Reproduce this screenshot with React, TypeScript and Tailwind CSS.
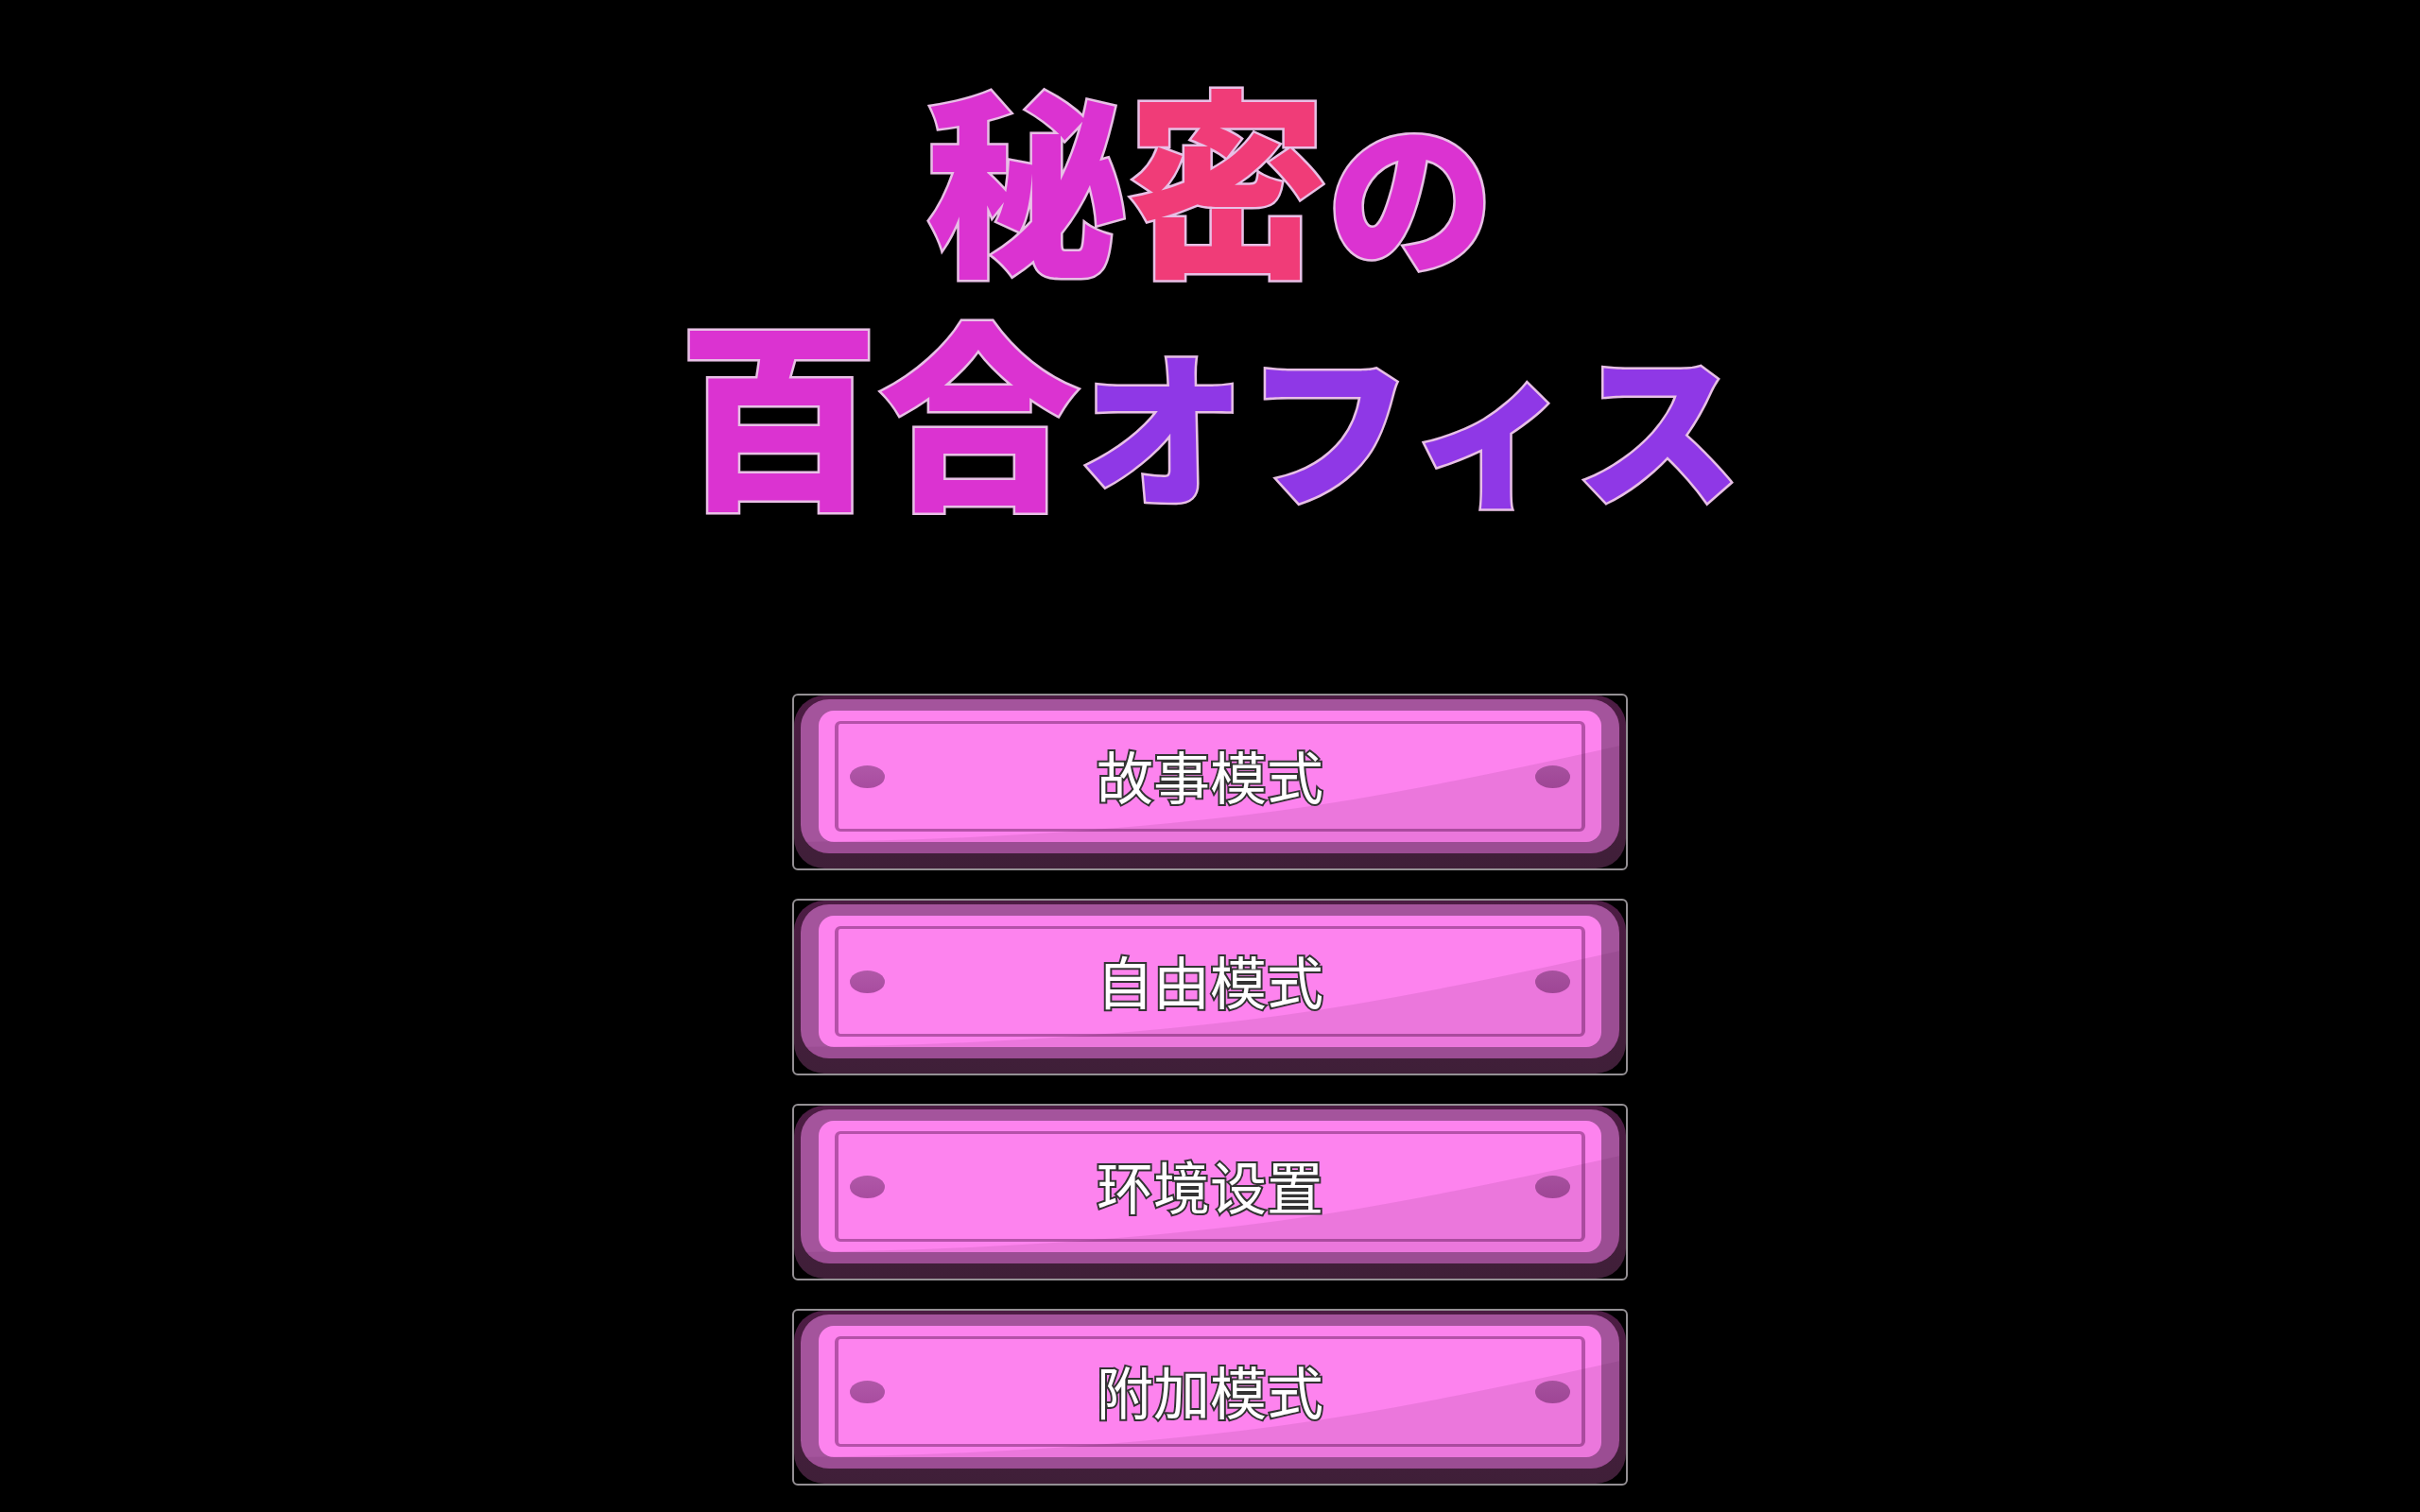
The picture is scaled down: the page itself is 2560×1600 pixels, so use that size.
interface MenuItem {
  id: string;
  label: string;
}

const MENU: MenuItem[] = [
  { id: "story", label: "故事模式" },
  { id: "free", label: "自由模式" },
  { id: "settings", label: "环境设置" },
  { id: "extra", label: "附加模式" },
];

function Title() {
  return (
    <h1
      lang="ja"
      className="text-center whitespace-nowrap font-['Liberation_Sans','Noto_Sans_CJK_JP',sans-serif] font-black text-[212px] leading-[246px] text-[#db33d1] [-webkit-text-stroke:5px_#e8c0e6] [paint-order:stroke_fill]"
    >
      <span className="block">
        秘<span className="text-[#f03c78]">密</span>
        <span className="text-[176px] leading-none">の</span>
      </span>
      <span className="block">
        百合<span className="text-[176px] leading-none text-[#8f38e6]">オフィス</span>
      </span>
    </h1>
  );
}

function Rivet() {
  return <span className="w-[37px] h-6 rounded-[50%] bg-linear-to-b from-[#b058a8] to-[#a84c9f]" />;
}

function MenuButton({ label }: { label: string }) {
  return (
    <button
      type="button"
      className="flex w-full h-[187px] rounded-md border-2 border-[#949094] cursor-pointer"
    >
      {/* Dark base of the plate */}
      <span className="flex w-full h-full rounded-[32px] bg-linear-to-b from-[#4d1c44] to-[#3f1f38] px-[7px] pt-1 pb-4">
        {/* Bevel */}
        <span className="relative flex w-full rounded-[30px] overflow-hidden bg-[#a4549c] px-[19px] py-3">
          {/* Face */}
          <span className="flex w-full rounded-2xl bg-[#fd83ee] px-[17px] py-[11px]">
            <span className="flex w-full items-center justify-between rounded-md border-x-4 border-y-3 border-[#b552a9] px-3">
              <Rivet />
              <span className="relative z-10 pb-1 font-['Noto_Sans_CJK_SC',sans-serif] text-[60px] leading-none text-white [-webkit-text-stroke:4px_#333] [paint-order:stroke_fill]">
                {label}
              </span>
              <Rivet />
            </span>
          </span>
          {/* Shade along the lower right */}
          <svg
            className="absolute inset-0 w-full h-full"
            viewBox="0 0 866 162"
            preserveAspectRatio="none"
            aria-hidden="true"
          >
            <path d="M866 49 Q700 86 586 105 Q340 146 0 150 V162 H866 Z" fill="#501040" fillOpacity="0.1" />
          </svg>
        </span>
      </span>
    </button>
  );
}

export default function App() {
  return (
    <main className="min-h-screen bg-black flex flex-col items-center pt-20 pb-7">
      <Title />
      <nav aria-label="主菜单" lang="zh-CN" className="mt-[162px] flex w-full max-w-[884px] flex-col gap-[30px]">
        {MENU.map(item => (
          <MenuButton key={item.id} label={item.label} />
        ))}
      </nav>
    </main>
  );
}
